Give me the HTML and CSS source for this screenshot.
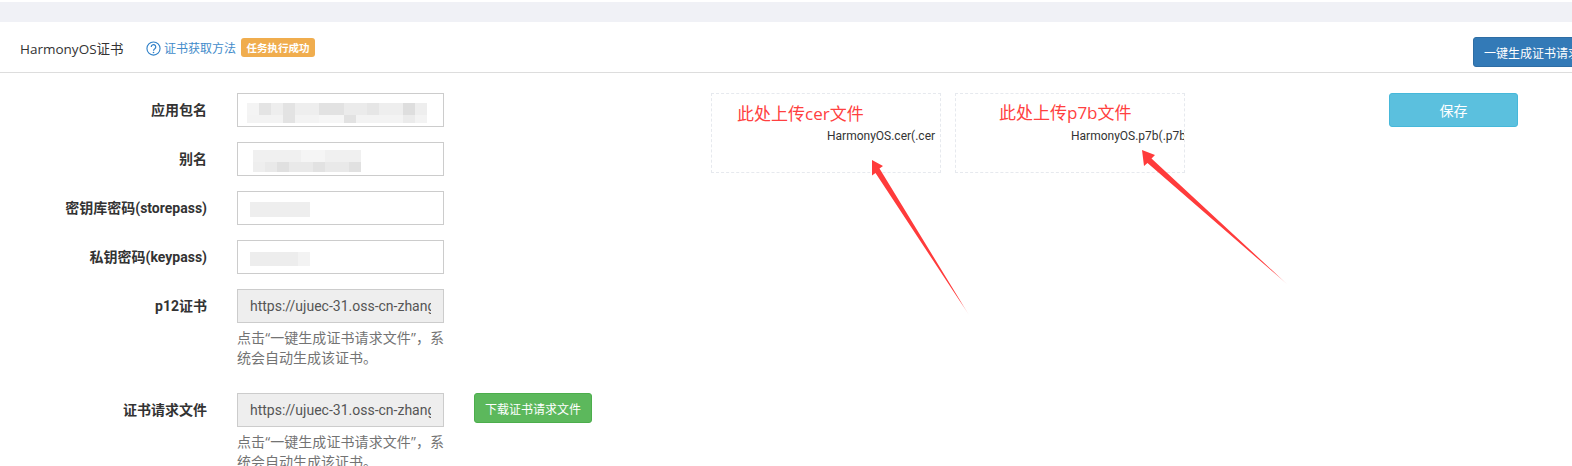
FILE: index.html
```html
<!DOCTYPE html>
<html lang="zh-CN">
<head>
<meta charset="utf-8">
<title>HarmonyOS证书</title>
<link rel="stylesheet" href="styles.css">
</head>
<body>
<div class="page">
  <div class="band"></div>
  <header class="head">
    <h1 class="title">HarmonyOS证书</h1>
    <a class="link">
      <svg class="help-icon" viewBox="0 0 16 16" width="15" height="15"><circle cx="8" cy="8" r="7" fill="none" stroke="#2f80c8" stroke-width="1.2"/><path d="M5.6 6.3a2.4 2.4 0 1 1 3.800 1.900c-.9.6-1.400 1-1.400 2.100" fill="none" stroke="#2f80c8" stroke-width="1.300"/><circle cx="8" cy="12.200" r=".85" fill="#2f80c8"/></svg>
      证书获取方法
    </a>
    <span class="badge">任务执行成功</span>
    <button class="btn btn-primary">一键生成证书请求文件</button>
  </header>
  <main class="main">
    <form class="form">
      <div class="row">
        <label class="label">应用包名</label>
        <div class="box">
          <svg class="mosaic mosaic-pkg" width="180" height="20" viewBox="0 0 180 20" shape-rendering="crispEdges">
            <rect width="180" height="12" fill="#eeeeee"/><rect y="12" width="180" height="8" fill="#f3f3f3"/>
            <rect width="12" height="12" fill="#f4f4f4"/><rect x="12" width="12" height="12" fill="#e4e4e4"/><rect x="36" width="12" height="20" fill="#e3e3e3"/><rect x="72" width="25" height="12" fill="#e2e2e2"/><rect x="97" width="23" height="12" fill="#ebebeb"/><rect x="120" width="12" height="12" fill="#e6e6e6"/><rect x="156" width="12" height="12" fill="#dedede"/>
            <rect x="72" y="12" width="25" height="8" fill="#f6f6f6"/><rect x="97" y="12" width="12" height="8" fill="#e2e2e2"/><rect x="156" y="12" width="12" height="8" fill="#ebebeb"/>
          </svg>
        </div>
      </div>
      <div class="row">
        <label class="label">别名</label>
        <div class="box">
          <svg class="mosaic mosaic-alias" width="108" height="22" viewBox="0 0 108 22" shape-rendering="crispEdges">
            <rect width="108" height="12" fill="#f0f0f0"/><rect y="12" width="108" height="10" fill="#e9e9e9"/>
            <rect x="24" y="12" width="12" height="10" fill="#e0e0e0"/><rect x="60" y="12" width="12" height="10" fill="#e2e2e2"/><rect x="96" y="12" width="12" height="10" fill="#e1e1e1"/><rect x="48" width="24" height="12" fill="#f5f5f5"/><rect y="12" width="12" height="10" fill="#eeeeee"/>
          </svg>
        </div>
      </div>
      <div class="row">
        <label class="label">密钥库密码(storepass)</label>
        <div class="box">
          <svg class="mosaic mosaic-store" width="60" height="15" viewBox="0 0 60 15"><rect width="60" height="15" fill="#eeeeee"/></svg>
        </div>
      </div>
      <div class="row">
        <label class="label">私钥密码(keypass)</label>
        <div class="box">
          <svg class="mosaic mosaic-key" width="60" height="14" viewBox="0 0 60 14"><rect width="60" height="14" fill="#ededed"/><rect x="48" width="12" height="14" fill="#f3f3f3"/></svg>
        </div>
      </div>
      <div class="row row-tall">
        <label class="label">p12证书</label>
        <div class="field">
          <input class="box input-url" readonly value="https://ujuec-31.oss-cn-zhangjiakou.aliyuncs.com/cert.p12">
          <p class="hint">点击“一键生成证书请求文件”，系统会自动生成该证书。</p>
        </div>
      </div>
      <div class="row">
        <label class="label">证书请求文件</label>
        <div class="field">
          <input class="box input-url" readonly value="https://ujuec-31.oss-cn-zhangjiakou.aliyuncs.com/cert.csr">
          <p class="hint">点击“一键生成证书请求文件”，系统会自动生成该证书。</p>
        </div>
        <button type="button" class="btn btn-success">下载证书请求文件</button>
      </div>
    </form>
    <section class="uploads">
      <div class="drop"><div class="file">HarmonyOS.cer(.cer</div></div>
      <div class="drop"><div class="file">HarmonyOS.p7b(.p7b</div></div>
    </section>
    <button class="btn btn-info">保存</button>
    <span class="note note-cer">此处上传cer文件</span>
    <span class="note note-p7b">此处上传p7b文件</span>
    <svg class="arrows" width="1572" height="466" viewBox="0 0 1572 466">
      <defs>
        <linearGradient id="fadeA" gradientUnits="userSpaceOnUse" x1="872" y1="160" x2="969" y2="315"><stop offset=".9" stop-color="#ff3b3b"/><stop offset="1" stop-color="#ff3b3b" stop-opacity=".15"/></linearGradient>
        <linearGradient id="fadeB" gradientUnits="userSpaceOnUse" x1="1142" y1="150" x2="1288" y2="285"><stop offset=".9" stop-color="#ff3b3b"/><stop offset="1" stop-color="#ff3b3b" stop-opacity=".15"/></linearGradient>
      </defs>
      <path d="M872 160L883 166L879.500 168.500L969 315L875.500 173L872 175.500Z" fill="url(#fadeA)"/>
      <path d="M1142 150L1155 155L1151.500 158.500L1288 285L1147.500 163L1144 166Z" fill="url(#fadeB)"/>
    </svg>
  </main>
</div>
</body>
</html>
```
FILE: styles.css
```css
* { box-sizing: border-box; }
html, body { margin: 0; padding: 0; background: #fff; }
body { font-family: "Noto Sans CJK SC", sans-serif; font-size: 14px; color: #333; }
.page { width: 1572px; height: 466px; overflow: hidden; padding-top: 2px; }
.band { height: 20px; background: #f0f1f6; }
.head { height: 51px; display: flex; align-items: center; padding: 1px 0 0 20px; border-bottom: 1px solid #ddd; position: relative; white-space: nowrap; }
.title { margin: 0; font-family: "Open Sans", "Noto Sans CJK SC", sans-serif; font-size: 13.5px; font-weight: 400; color: #333; width: 126px; }
.link { display: flex; align-items: center; gap: 3px; color: #428bca; font-size: 12px; }
.help-icon { display: block; margin-top: 2px; }
.badge { margin-left: 5px; background: #f0ad4e; color: #fff; font-size: 10.5px; font-weight: 700; line-height: 19px; padding: 0 5.5px; border-radius: 3px; }
.btn { font-family: inherit; color: #fff; border: 1px solid transparent; border-radius: 3px; padding: 0; white-space: nowrap; }
.btn-primary { position: absolute; left: 1473px; top: 15px; width: 160px; height: 30px; font-size: 12px; background: #337ab7; border-color: #2e6da4; text-align: left; padding-left: 10px; }
.main { position: relative; display: flex; align-items: flex-start; padding-top: 20px; height: 393px; }
.form { width: 711px; flex: none; }
.row { display: flex; align-items: flex-start; margin-bottom: 15px; }
.row-tall { margin-bottom: 25px; }
.label { width: 207px; flex: none; margin-right: 30px; text-align: right; font-family: Roboto, "Noto Sans CJK SC", sans-serif; font-weight: 700; font-size: 14px; line-height: 34px; color: #333; }
.box { display: flex; align-items: center; width: 207px; height: 34px; padding: 0 12px; border: 1px solid #ccc; background: #fff; font-family: Roboto, "Noto Sans CJK SC", sans-serif; font-size: 14px; color: #555; flex: none; }
.input-url { display: block; background: #eee; outline: none; }
.field { width: 207px; flex: none; }
.hint { margin: 5px 0 0; font-family: "Open Sans", "Noto Sans CJK SC", sans-serif; font-size: 14px; line-height: 20px; color: #737373; text-align: justify; }
.mosaic { display: block; filter: blur(.6px); }
.mosaic-pkg { margin-left: -3px; margin-top: 6px; }
.mosaic-alias { margin-left: 3px; margin-top: 4px; }
.mosaic-store { margin-top: 3px; }
.mosaic-key { margin-top: 4px; }
.btn-success { width: 118px; height: 30px; margin-left: 30px; font-size: 12px; background: #5cb85c; border-color: #4cae4c; }
.uploads { display: flex; gap: 14px; flex: none; }
.drop { width: 230px; height: 80px; border: 1px dashed #e6e9ee; padding-top: 33px; padding-left: 115px; overflow: hidden; }
.file { font-family: Roboto, "Noto Sans CJK SC", sans-serif; font-size: 12px; line-height: 18px; color: #333; white-space: nowrap; }
.btn-info { width: 129px; height: 34px; margin-left: 204px; font-size: 14px; background: #5bc0de; border-color: #46b8da; }
.note { position: absolute; font-family: "Open Sans", "Noto Sans CJK SC", sans-serif; color: #ff4040; font-size: 17px; line-height: 24px; white-space: nowrap; }
.note-cer { left: 737px; top: 29px; }
.note-p7b { left: 999px; top: 28px; }
.arrows { position: absolute; left: 0; top: -73px; pointer-events: none; }
```
